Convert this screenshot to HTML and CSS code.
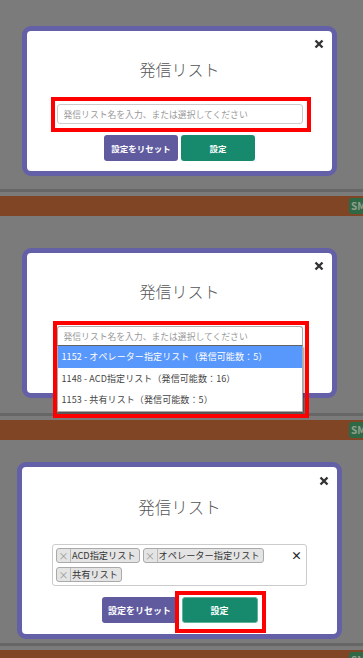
FILE: index.html
```html
<!DOCTYPE html>
<html lang="ja">
<head>
    <meta charset="UTF-8">
    <meta name="viewport" content="width=device-width, initial-scale=1.0">
    <title>発信リスト</title>
    <link rel="stylesheet" href="styles.css">
</head>
<body>
    <!-- 1: empty input -->
    <div class="shot shot-1">
        <div class="modal">
            <svg class="close" width="10" height="10" viewBox="0 0 10 10"><path d="M1.5 1.5L8.5 8.5M8.5 1.5L1.5 8.5" stroke="#333" stroke-width="2.4"/></svg>
            <h2 class="title">発信リスト</h2>
            <div class="field">
                <input class="list-input" type="text" placeholder="発信リスト名を入力、または選択してください">
                <span class="mark mark-input"></span>
            </div>
            <div class="actions">
                <button class="btn btn-reset">設定をリセット</button>
                <button class="btn btn-set">設定</button>
            </div>
        </div>
        <div class="foot"><div class="bar"><span class="sms">SMS</span></div></div>
    </div>

    <!-- 2: dropdown open -->
    <div class="shot shot-2">
        <div class="modal">
            <svg class="close" width="10" height="10" viewBox="0 0 10 10"><path d="M1.5 1.5L8.5 8.5M8.5 1.5L1.5 8.5" stroke="#333" stroke-width="2.4"/></svg>
            <h2 class="title">発信リスト</h2>
            <div class="field open">
                <input class="list-input" type="text" placeholder="発信リスト名を入力、または選択してください">
                <ul class="dropdown">
                    <li class="option active">1152 - オペレーター指定リスト（発信可能数：5）</li>
                    <li class="option">1148 - ACD指定リスト（発信可能数：16）</li>
                    <li class="option">1153 - 共有リスト（発信可能数：5）</li>
                </ul>
                <span class="mark mark-dropdown"></span>
            </div>
            <div class="actions">
                <button class="btn btn-reset">設定をリセット</button>
                <button class="btn btn-set">設定</button>
            </div>
        </div>
        <div class="foot"><div class="bar"><span class="sms">SMS</span></div></div>
    </div>

    <!-- 3: selected tags -->
    <div class="shot shot-3">
        <div class="modal modal-wide">
            <svg class="close" width="10" height="10" viewBox="0 0 10 10"><path d="M1.5 1.5L8.5 8.5M8.5 1.5L1.5 8.5" stroke="#333" stroke-width="2.4"/></svg>
            <h2 class="title">発信リスト</h2>
            <div class="multi">
                <ul class="tags">
                    <li class="tag"><span class="tag-x">×</span>ACD指定リスト</li>
                    <li class="tag"><span class="tag-x">×</span>オペレーター指定リスト</li>
                    <li class="tag"><span class="tag-x">×</span>共有リスト</li>
                </ul>
                <span class="clear">×</span>
            </div>
            <div class="actions">
                <button class="btn btn-reset">設定をリセット</button>
                <button class="btn btn-set is-focus">設定<span class="mark mark-btn"></span></button>
            </div>
        </div>
        <div class="foot"><div class="bar"><span class="sms">SMS</span></div></div>
    </div>
</body>
</html>
```

FILE: styles.css
```css
body {
    margin: 0;
    background-color: #7b7b7b; /* backdrop */
    font-family: "Noto Sans CJK JP", "Noto Sans", sans-serif;
    color: #333;
}

.shot {
    display: flex;
    flex-direction: column;
    gap: 4px;
    overflow: hidden;
}

.shot-1 {
    height: 216px;
    padding-top: 26px;
    box-sizing: border-box;
}

.shot-2 {
    height: 224px;
    padding-top: 32px;
    box-sizing: border-box;
}

.shot-3 {
    height: 218px;
    padding-top: 22px;
    box-sizing: border-box;
}

.modal {
    position: relative;
    flex-shrink: 0;
    margin-left: 22px;
    width: 315px;
    box-sizing: border-box;
    border: 5px solid #6460a8;
    border-radius: 9px;
    background-color: #fff;
    text-align: center;
    padding-bottom: 10px;
}

.modal-wide {
    margin-left: 17px;
    width: 325px;
    padding-bottom: 11px;
}

.close {
    position: absolute;
    top: 8px;
    right: 8px;
}

.modal-wide .close {
    top: 9px;
}

.title {
    margin: 0;
    padding-top: 28px;
    font-size: 16px;
    line-height: 20px;
    font-weight: 300;
    color: #555;
}

.modal-wide .title {
    padding-top: 30px;
    font-size: 16.5px;
}

/* input */
.field {
    position: relative;
    width: 246px;
    margin: 25px auto 0;
}

.list-input {
    display: block;
    width: 100%;
    height: 20px;
    box-sizing: border-box;
    margin: 0;
    padding: 0 6px;
    border: 1px solid #ccc;
    border-radius: 3px;
    font-family: inherit;
    font-size: 8.8px;
    outline: none;
}

.list-input::placeholder {
    color: #9a9a9a;
}

.field.open .list-input {
    border-color: #aaa;
    border-bottom-color: #666;
    border-radius: 3px 3px 0 0;
}

.dropdown {
    position: absolute;
    top: 100%;
    left: 0;
    right: 0;
    margin: 0;
    padding: 0;
    list-style: none;
    background-color: #fff;
    border: 1px solid #aaa;
    border-top: 0;
    box-shadow: 1px 1px 2px rgba(0, 0, 0, 0.45);
    text-align: left;
    z-index: 2;
}

.option {
    height: 21.5px;
    line-height: 21.5px;
    padding: 0 4px;
    font-size: 9px;
    letter-spacing: 0.1px;
    color: #444;
    white-space: nowrap;
}

.option.active {
    background-color: #5897fb;
    color: #fff;
}

/* buttons under the open list are covered */
.shot-2 .actions {
    visibility: hidden;
}

/* red highlight frames */
.mark {
    position: absolute;
    border: 4px solid #ff0000;
    pointer-events: none;
    z-index: 3;
}

.mark-input {
    top: -7px;
    left: -6px;
    right: -8px;
    bottom: -8px;
}

.mark-dropdown {
    top: -5px;
    left: -4px;
    right: -6px;
    bottom: -72px;
}

.mark-btn {
    top: -7px;
    left: -8px;
    right: -9px;
    bottom: -11px;
}

/* multi select */
.multi {
    display: flex;
    align-items: flex-start;
    width: 255px;
    margin: 27px auto 0;
    padding: 3px;
    box-sizing: border-box;
    border: 1px solid #ccc;
    border-radius: 3px;
}

.tags {
    display: flex;
    flex-wrap: wrap;
    gap: 4px 3px;
    flex: 1;
    margin: 0;
    padding: 0;
    list-style: none;
}

.tag {
    display: flex;
    height: 15px;
    box-sizing: border-box;
    padding-right: 3px;
    border: 1px solid #aaa;
    border-radius: 3px;
    background-color: #e4e4e4;
    font-size: 9.2px;
    line-height: 13px;
    color: #333;
    white-space: nowrap;
}

.tag-x {
    width: 13px;
    margin-right: 1px;
    border-right: 1px solid #bbb;
    color: #999;
    font-size: 10px;
}

.clear {
    width: 10px;
    margin-right: 2px;
    line-height: 15px;
    font-size: 11px;
    font-weight: bold;
    color: #222;
}

/* buttons */
.actions {
    display: flex;
    justify-content: center;
    gap: 3px;
    margin-top: 11px;
}

.modal-wide .actions {
    gap: 4px;
}

.btn {
    position: relative;
    width: 74px;
    height: 26px;
    padding: 0;
    border: 0;
    border-radius: 3px;
    color: #fff;
    font-family: inherit;
    font-size: 8.5px;
    font-weight: bold;
    cursor: pointer;
}

.modal-wide .btn {
    width: 76px;
    font-size: 9px;
}

.btn-reset {
    background-color: #605b9f;
}

.btn-set {
    background-color: #178a6d;
}

.btn-set.is-focus {
    border: 1px solid #5fb39a;
}

/* page behind the modal */
.foot {
    flex-shrink: 0;
    margin-top: auto;
    border-top: 3px solid #666;
    padding-top: 4px;
}

.bar {
    display: flex;
    justify-content: flex-end;
    align-items: center;
    height: 20px;
    background-color: #7f4524;
}

.sms {
    width: 12px;
    height: 16px;
    padding-left: 2px;
    overflow: hidden;
    border-radius: 3px 0 0 3px;
    background-color: #2f6845;
    color: #8fa08d;
    font-size: 10px;
    font-weight: bold;
    line-height: 16px;
    white-space: nowrap;
}
```
